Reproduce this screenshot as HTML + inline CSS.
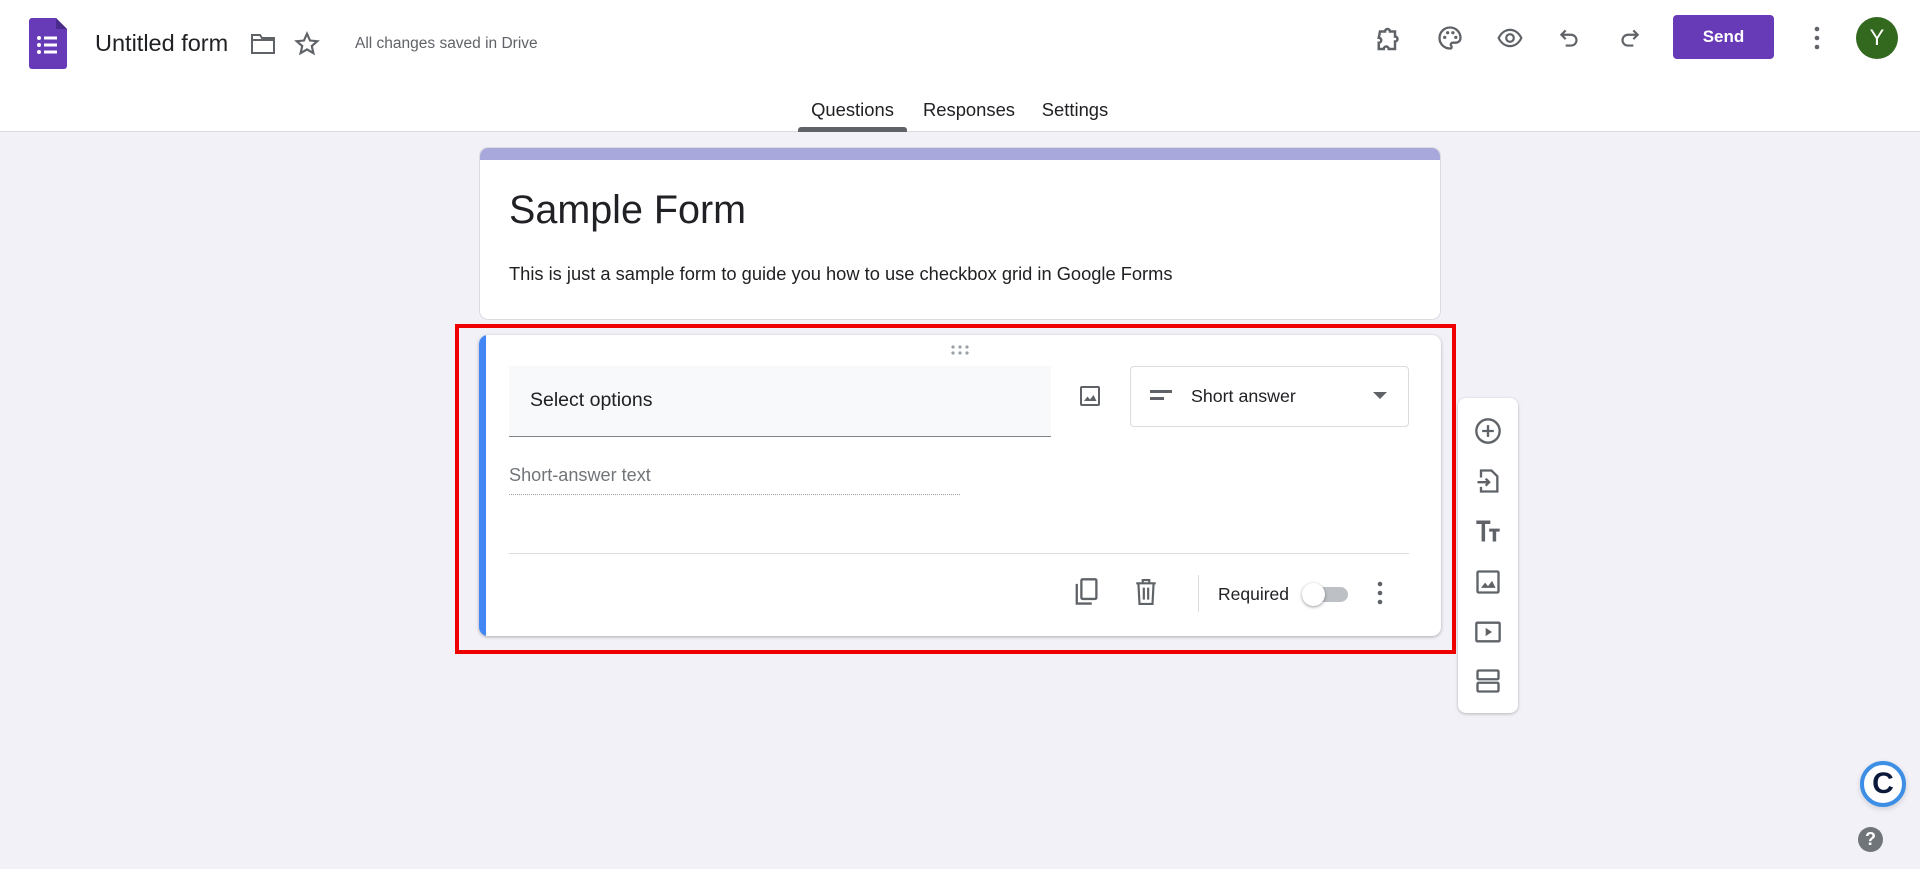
<!DOCTYPE html>
<html><head><meta charset="utf-8"><style>
*{box-sizing:border-box;margin:0;padding:0}
body{width:1920px;height:869px;overflow:hidden;background:#f1f1f7;font-family:"Liberation Sans",sans-serif;position:relative;color:#202124}
.a{position:absolute}
svg{display:block}
.ic{fill:none;stroke:#5f6368;stroke-width:2}
</style></head><body>
<div class="a" style="left:0;top:0;width:1920px;height:132px;background:#fff;border-bottom:1px solid #dadce0"></div>
<svg class="a" style="left:29px;top:18px" width="38" height="51" viewBox="0 0 38 51"><path d="M3 0H27L38 11V48a3 3 0 0 1-3 3H3a3 3 0 0 1-3-3V3a3 3 0 0 1 3-3z" fill="#673ab7"/><path d="M27 0V11H38z" fill="#4a2a8a"/><g fill="#fff"><circle cx="10" cy="20" r="2"/><circle cx="10" cy="27" r="2"/><circle cx="10" cy="34" r="2"/><rect x="15" y="18.5" width="13" height="3"/><rect x="15" y="25.5" width="13" height="3"/><rect x="15" y="32.5" width="13" height="3"/></g></svg>
<div class="a" style="left:95px;top:30px;font-size:23.5px;color:#202124">Untitled form</div>
<svg class="a" style="left:250px;top:32px" width="26" height="24" viewBox="0 0 26 24"><path class="ic" d="M2 3h8l2 3h12v15H2z" stroke-width="2.2"/><path class="ic" d="M2 8h22"/></svg>
<svg class="a" style="left:294px;top:31px" width="26" height="26" viewBox="0 0 24 24"><path class="ic" d="M12 2.5l2.8 6.3 6.7.6-5.1 4.5 1.5 6.6L12 17l-5.9 3.5 1.5-6.6-5.1-4.5 6.7-.6z"/></svg>
<div class="a" style="left:355px;top:35px;font-size:15.5px;color:#5f6368">All changes saved in Drive</div>
<svg class="a" style="left:1375px;top:24px" width="30" height="30" viewBox="0 0 24 24"><path class="ic" d="M4 6h4a2 2 0 0 1 4 0h4v4a2 2 0 0 1 0 4v6h-5a2 2 0 0 0-4 0H3v-5a2 2 0 0 0 0-4z" stroke-width="2.2"/></svg>
<svg class="a" style="left:1436px;top:24px" width="28" height="28" viewBox="0 0 24 24"><path class="ic" d="M12 3a9 9 0 1 0 0 18c1.5 0 1.8-1.3 1-2.3-.8-1 0-2.7 1.5-2.7H17a4 4 0 0 0 4-4c0-5-4-9-9-9z"/><g fill="#5f6368"><circle cx="7.5" cy="11.5" r="1.4"/><circle cx="10" cy="7.5" r="1.4"/><circle cx="14.5" cy="7.5" r="1.4"/><circle cx="17" cy="11.5" r="1.4"/></g></svg>
<svg class="a" style="left:1496px;top:25px" width="28" height="26" viewBox="0 0 24 24"><path class="ic" d="M1.5 12C4 7 8 4.5 12 4.5S20 7 22.5 12C20 17 16 19.5 12 19.5S4 17 1.5 12z"/><circle class="ic" cx="12" cy="12" r="3.5"/></svg>
<svg class="a" style="left:1557px;top:25px" width="26" height="26" viewBox="0 0 24 24"><path class="ic" d="M8 5L4 9l4 4M4 9h9a5 5 0 0 1 0 10H8"/></svg>
<svg class="a" style="left:1616px;top:25px" width="26" height="26" viewBox="0 0 24 24"><path class="ic" d="M16 5l4 4-4 4M20 9h-9a5 5 0 0 0 0 10h5"/></svg>
<div class="a" style="left:1673px;top:15px;width:101px;height:44px;background:#673ab7;border-radius:4px;color:#fff;font-weight:bold;font-size:17px;text-align:center;line-height:44px">Send</div>
<svg class="a" style="left:1807px;top:24px" width="20" height="28"><g fill="#5f6368"><circle cx="10" cy="5" r="2.3"/><circle cx="10" cy="14" r="2.3"/><circle cx="10" cy="23" r="2.3"/></g></svg>
<div class="a" style="left:1856px;top:17px;width:42px;height:42px;border-radius:50%;background:#33691e;color:#fff;font-size:22px;text-align:center;line-height:42px">Y</div>
<div class="a" style="left:793px;top:99px;width:119px;text-align:center;font-size:18.4px;color:#202124">Questions</div>
<div class="a" style="left:798px;top:127px;width:109px;height:5px;background:#5f6368;border-radius:3px 3px 0 0"></div>
<div class="a" style="left:914px;top:99px;width:110px;text-align:center;font-size:18.4px">Responses</div>
<div class="a" style="left:1025px;top:99px;width:100px;text-align:center;font-size:18.4px">Settings</div>
<div class="a" style="left:479px;top:147px;width:962px;height:173px;background:#fff;border-radius:9px;border:1px solid #dadce0;overflow:hidden">
<div style="height:12px;background:#a8a8dc"></div></div>
<div class="a" style="left:509px;top:188px;font-size:39.5px">Sample Form</div>
<div class="a" style="left:509px;top:263px;font-size:18.3px;color:#202124">This is just a sample form to guide you how to use checkbox grid in Google Forms</div>
<div class="a" style="left:455px;top:324px;width:1001px;height:330px;border:4px solid #ee0000"></div>
<div class="a" style="left:479px;top:335px;width:962px;height:301px;background:#fff;border-radius:9px;box-shadow:0 1px 3px rgba(0,0,0,.3);overflow:hidden"><div style="position:absolute;left:0;top:0;bottom:0;width:7px;background:#4285f4"></div></div>
<svg class="a" style="left:950px;top:344px" width="20" height="12"><g fill="#9aa0a6"><circle cx="3" cy="3" r="1.6"/><circle cx="10" cy="3" r="1.6"/><circle cx="17" cy="3" r="1.6"/><circle cx="3" cy="9" r="1.6"/><circle cx="10" cy="9" r="1.6"/><circle cx="17" cy="9" r="1.6"/></g></svg>
<div class="a" style="left:509px;top:366px;width:542px;height:71px;background:#f8f9fa;border-bottom:1px solid #80868b"></div>
<div class="a" style="left:530px;top:389px;font-size:19.5px">Select options</div>
<svg class="a" style="left:1078px;top:384px" width="24" height="24" viewBox="0 0 24 24"><rect class="ic" x="3" y="3" width="18" height="18" rx="1"/><path d="M6 17l3.5-4.5 2.5 3 3.5-4.5 3 6z" fill="#5f6368"/></svg>
<div class="a" style="left:1130px;top:366px;width:279px;height:61px;border:1px solid #dadce0;border-radius:4px;background:#fff"></div>
<svg class="a" style="left:1150px;top:388px" width="22" height="14"><rect x="0" y="2" width="22" height="3" fill="#5f6368"/><rect x="0" y="9" width="14" height="3" fill="#5f6368"/></svg>
<div class="a" style="left:1191px;top:386px;font-size:17.8px">Short answer</div>
<svg class="a" style="left:1373px;top:392px" width="14" height="8"><path d="M0 0h14L7 7z" fill="#5f6368"/></svg>
<div class="a" style="left:509px;top:465px;font-size:18.1px;color:#70757a">Short-answer text</div>
<div class="a" style="left:509px;top:494px;width:451px;border-bottom:1px dotted #9aa0a6"></div>
<div class="a" style="left:509px;top:553px;width:900px;height:1px;background:#dadce0"></div>
<svg class="a" style="left:1072px;top:577px" width="28" height="30" viewBox="0 0 24 26"><path class="ic" d="M4 6v17h13" stroke-width="2.2"/><rect class="ic" x="8" y="2" width="13" height="17" rx="1" stroke-width="2.2"/></svg>
<svg class="a" style="left:1133px;top:577px" width="26" height="30" viewBox="0 0 24 26"><path class="ic" d="M3 5h18M9 5V2h6v3M5 5l1 19h12l1-19M10 9v11M14 9v11" stroke-width="2.2"/></svg>
<div class="a" style="left:1198px;top:575px;width:1px;height:37px;background:#dadce0"></div>
<div class="a" style="left:1218px;top:584px;font-size:17.5px">Required</div>
<div class="a" style="left:1310px;top:587px;width:38px;height:15px;border-radius:8px;background:#bdc1c6"></div>
<div class="a" style="left:1302px;top:583px;width:23px;height:23px;border-radius:50%;background:#fff;box-shadow:0 1px 3px rgba(0,0,0,.4)"></div>
<svg class="a" style="left:1370px;top:580px" width="20" height="28"><g fill="#5f6368"><circle cx="10" cy="4" r="2.3"/><circle cx="10" cy="13" r="2.3"/><circle cx="10" cy="22" r="2.3"/></g></svg>
<div class="a" style="left:1458px;top:398px;width:60px;height:315px;background:#fff;border-radius:8px;box-shadow:0 1px 3px rgba(0,0,0,.25)"></div>
<svg class="a" style="left:1474px;top:417px" width="28" height="28" viewBox="0 0 24 24"><circle class="ic" cx="12" cy="12" r="10" stroke-width="2"/><path class="ic" d="M12 7v10M7 12h10"/></svg>
<svg class="a" style="left:1474px;top:467px" width="28" height="28" viewBox="0 0 24 24"><path class="ic" d="M6 9V3h9l5 5v13H6v-4M3 13h10M10 10l3 3-3 3"/></svg>
<svg class="a" style="left:1474px;top:517px" width="28" height="28" viewBox="0 0 24 24"><path d="M2 3h12v3H9.5v15h-3V6H2zM13 10h9v2.5h-3V21h-3v-8.5h-3z" fill="#5f6368"/></svg>
<svg class="a" style="left:1474px;top:568px" width="28" height="28" viewBox="0 0 24 24"><rect class="ic" x="3" y="3" width="18" height="18" rx="1"/><path d="M6 17l3.5-4.5 2.5 3 3.5-4.5 3 6z" fill="#5f6368"/></svg>
<svg class="a" style="left:1474px;top:618px" width="28" height="28" viewBox="0 0 24 24"><rect class="ic" x="2" y="4" width="20" height="16" rx="1"/><path d="M10 8.5v7l5.5-3.5z" fill="#5f6368"/></svg>
<svg class="a" style="left:1474px;top:667px" width="28" height="28" viewBox="0 0 24 24"><rect class="ic" x="3" y="3" width="18" height="7.5" rx="1"/><rect class="ic" x="3" y="13.5" width="18" height="7.5" rx="1"/></svg>
<div class="a" style="left:1860px;top:761px;width:46px;height:46px;border-radius:50%;background:#fff;border:4px solid #3d8fe6;box-shadow:0 2px 6px rgba(0,0,0,.15);text-align:center;line-height:38px;font-size:30px;font-weight:bold;color:#0b1a3a">C</div>
<div class="a" style="left:1858px;top:827px;width:25px;height:25px;border-radius:50%;background:#70757a;color:#fff;text-align:center;line-height:25px;font-size:18px;font-weight:bold">?</div>
</body></html>
